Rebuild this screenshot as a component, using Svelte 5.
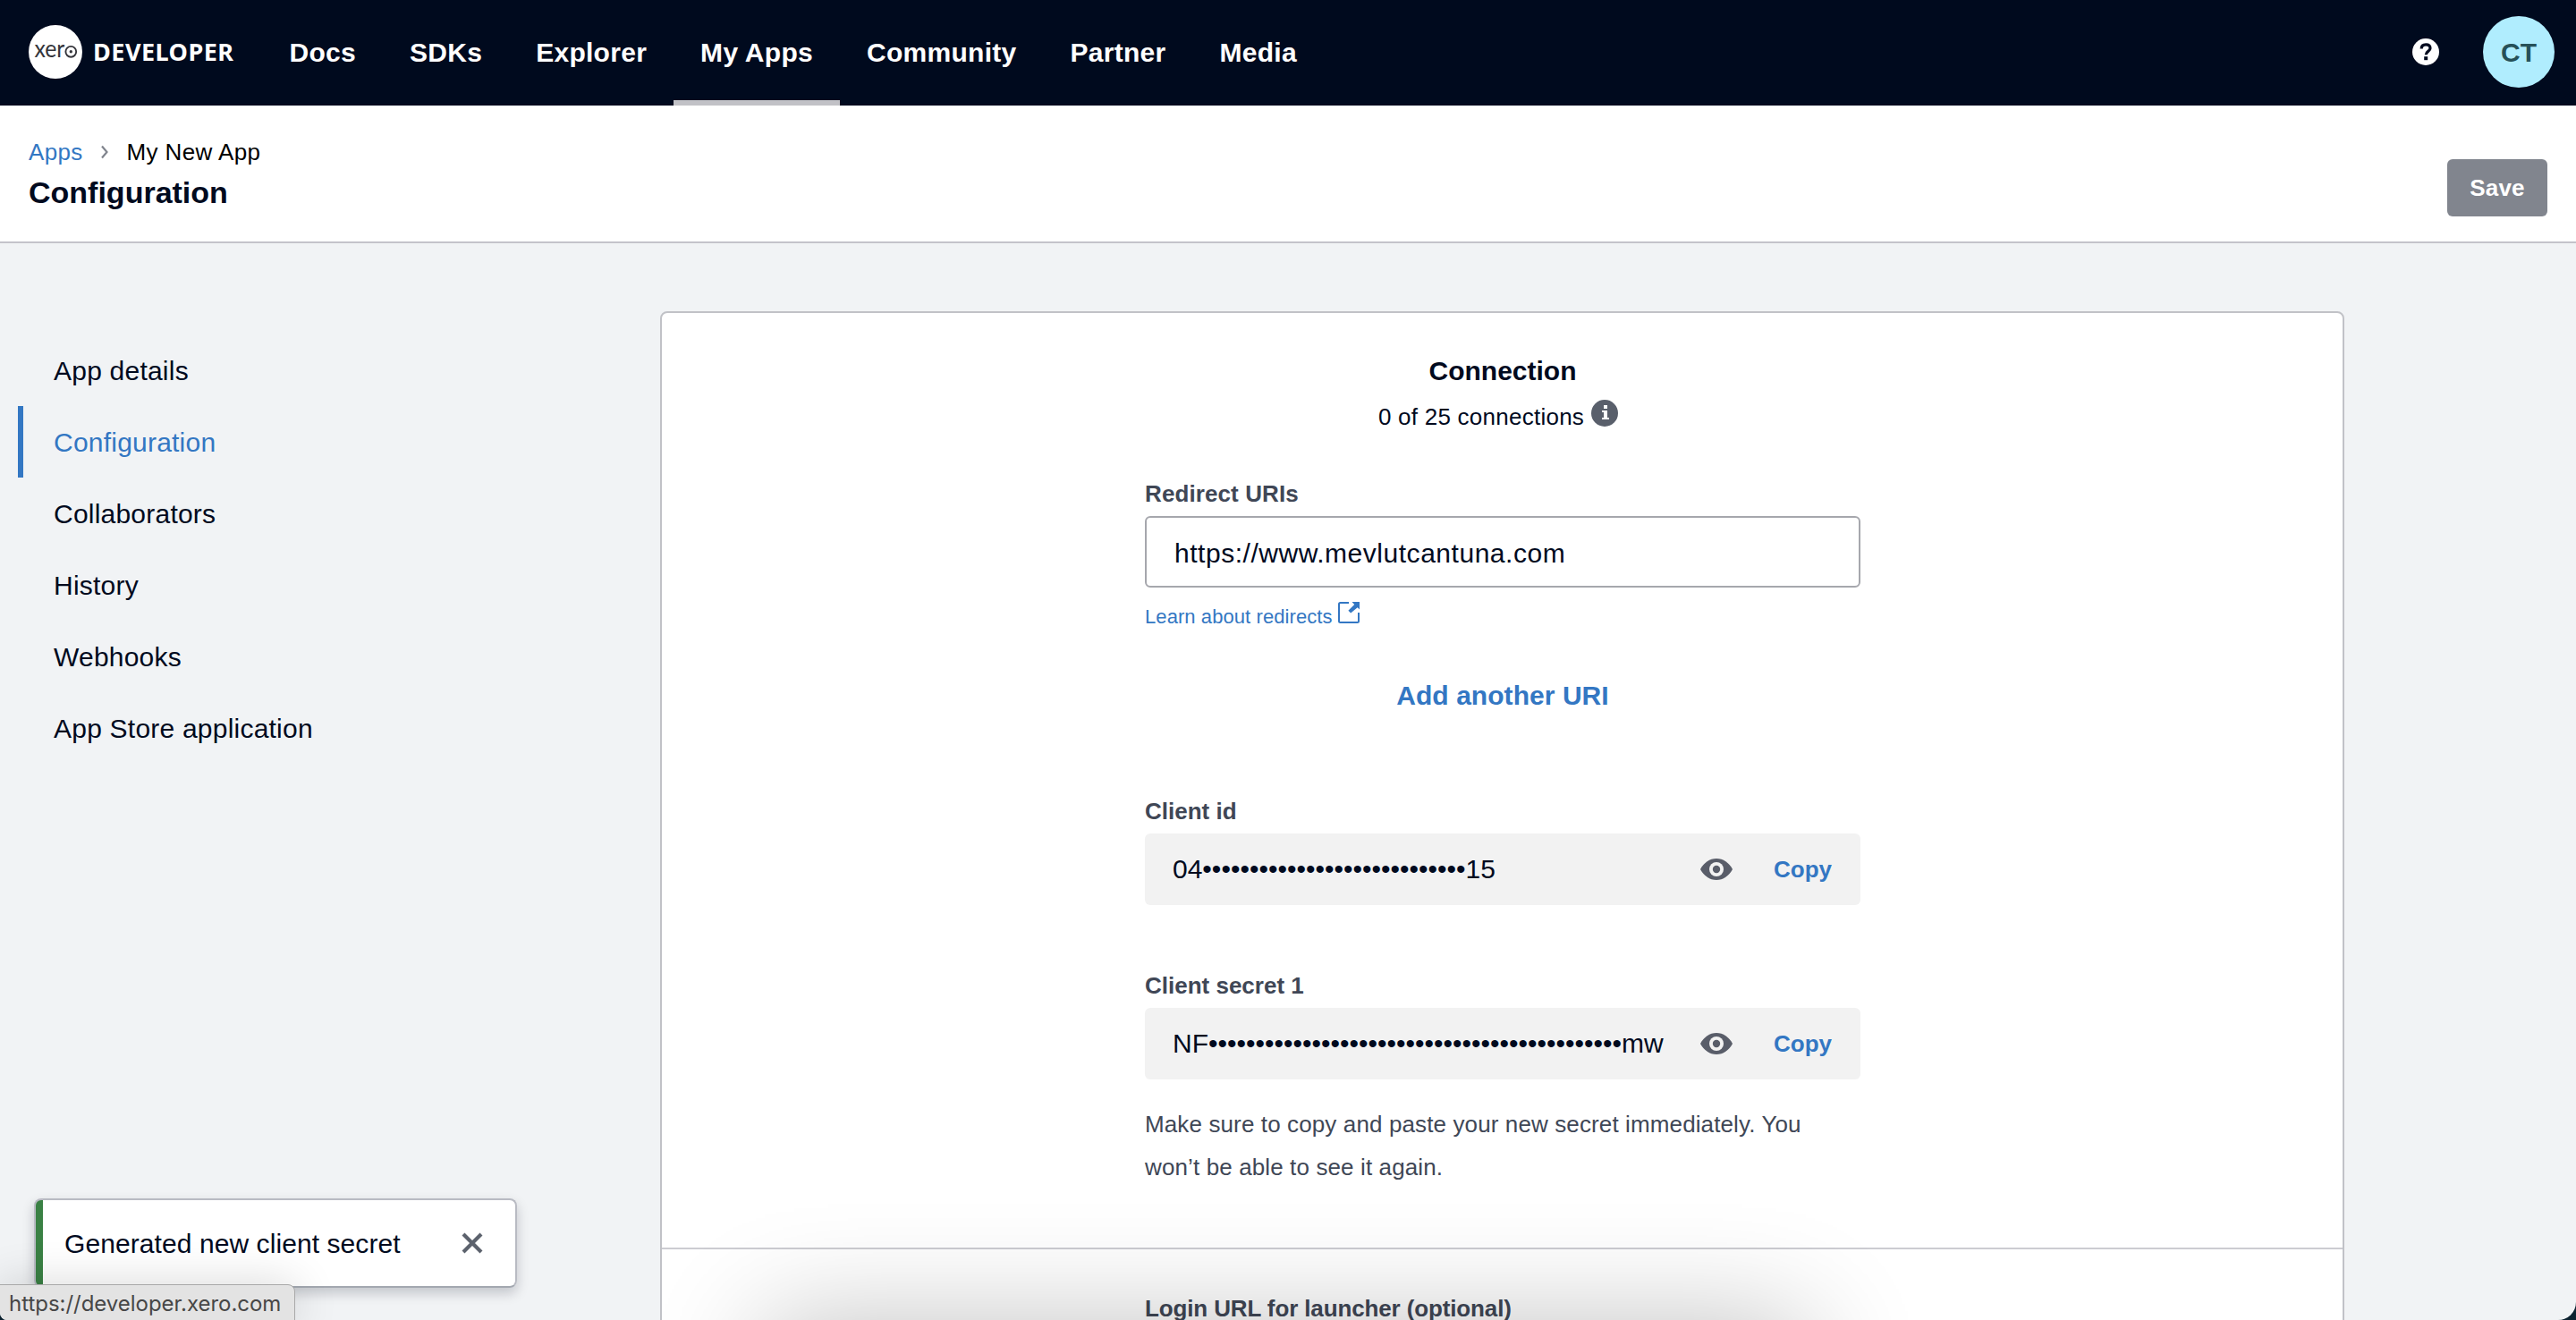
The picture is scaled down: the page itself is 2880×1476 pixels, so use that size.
<script>
  const navItems = ['Docs', 'SDKs', 'Explorer', 'My Apps', 'Community', 'Partner', 'Media'];
  const activeNav = 'My Apps';

  const sideItems = [
    'App details',
    'Configuration',
    'Collaborators',
    'History',
    'Webhooks',
    'App Store application'
  ];
  const activeSide = 'Configuration';

  const credentials = [
    { label: 'Client id', value: '04' + '•'.repeat(28) + '15' },
    { label: 'Client secret 1', value: 'NF' + '•'.repeat(44) + 'mw' }
  ];
</script>

<div class="window">
  <div class="page">
    <header class="topbar">
      <div class="brand">
        <svg class="logo" viewBox="0 0 60 60" width="60" height="60">
          <circle cx="30" cy="30" r="30" fill="#fff" />
          <text x="6.4" y="36.4" textLength="34" lengthAdjust="spacingAndGlyphs">xer</text>
          <circle cx="47.3" cy="29.8" r="5.900" fill="none" stroke="#35353b" stroke-width="1.900" />
          <circle cx="47.3" cy="29.8" r="1.7" fill="#35353b" />
        </svg>
        <span class="brand-name">DEVELOPER</span>
      </div>
      <nav class="nav">
        {#each navItems as item}
          <a class="nav-item" class:active={item === activeNav}>{item}</a>
        {/each}
      </nav>
      <div class="tools">
        <svg width="30" height="30" viewBox="0 0 30 30">
          <circle cx="15" cy="15" r="15" fill="#fff" />
          <path d="M10.2 11.6C10.2 8.6 12.2 6.9 15.2 6.9c2.9 0 4.8 1.6 4.8 4 0 3.6-4.7 3.4-4.7 7.3" fill="none" stroke="#000a1e" stroke-width="3.2" />
          <rect x="13.2" y="20.2" width="4" height="4" fill="#000a1e" />
        </svg>
        <div class="avatar">CT</div>
      </div>
    </header>

    <div class="titlebar">
      <div class="titles">
        <div class="crumbs">
          <a class="crumb-link">Apps</a>
          <svg width="10" height="16" viewBox="0 0 10 16">
            <path d="M2 1.5l5.5 6.5L2 14.5" fill="none" stroke="#81858e" stroke-width="2.2" />
          </svg>
          <span class="crumb-current">My New App</span>
        </div>
        <h1>Configuration</h1>
      </div>
      <button class="save">Save</button>
    </div>

    <div class="body">
      <aside class="side">
        {#each sideItems as item}
          <a class="side-item" class:active={item === activeSide}>{item}</a>
        {/each}
      </aside>

      <main class="card">
        <section class="column">
          <h2>Connection</h2>
          <div class="count">
            <span>0 of 25 connections</span>
            <svg width="30" height="30" viewBox="0 0 30 30">
              <circle cx="15" cy="15" r="15" fill="#595f6b" />
              <path d="M14 6h4v4h-4zM12 12h6v8h2v2h-8v-2h2v-6h-2z" fill="#fff" />
            </svg>
          </div>

          <div class="label redirect">Redirect URIs</div>
          <div class="input">https://www.mevlutcantuna.com</div>
          <a class="learn">
            <span>Learn about redirects</span>
            <svg width="24" height="24" viewBox="0 0 24 24">
              <path d="M12 1H2.500Q1 1 1 2.500V21.500Q1 23 2.500 23H21.500Q23 23 23 21.500V12" fill="none" stroke="#3377c3" stroke-width="2" />
              <path d="M15.500 0H24V8.500L21.700 6.300L14.200 12.600L11.400 9.800L18.200 3Z" fill="#3377c3" />
            </svg>
          </a>
          <button class="add">Add another URI</button>

          {#each credentials as cred}
            <div class="credential">
              <div class="label">{cred.label}</div>
              <div class="secret">
                <span class="value">{cred.value}</span>
                <svg width="36" height="24" viewBox="0 0 36 24">
                  <path d="M0 12C4 4.500 10.500 0 18 0s14 4.500 18 12c-4 7.500-10.500 12-18 12S4 19.500 0 12z" fill="#595d69" />
                  <circle cx="18" cy="12" r="8" fill="#f2f2f2" />
                  <circle cx="18" cy="12" r="4.200" fill="#595d69" />
                </svg>
                <button class="copy">Copy</button>
              </div>
            </div>
          {/each}
          <p class="hint">Make sure to copy and paste your new secret immediately. You won’t be able to see it again.</p>
        </section>
        <section class="launcher">
          <div class="column">
            <div class="label login">Login URL for launcher (optional)</div>
          </div>
        </section>
      </main>
    </div>

    <div class="sheet-shadow"></div>

    <div class="toast">
      <span class="toast-text">Generated new client secret</span>
      <svg width="24" height="24" viewBox="0 0 24 24">
        <path d="M2 2l20 20M22 2L2 22" stroke="#5c626d" stroke-width="4.200" />
      </svg>
    </div>

    <div class="status">https://developer.xero.com</div>
  </div>
</div>

<style>
  :global(body) {
    margin: 0;
    overflow: hidden;
  }
  .window {
    width: 2880px;
    height: 1476px;
    background: #0c2230;
    overflow: hidden;
  }
  .page {
    position: relative;
    display: flex;
    flex-direction: column;
    height: 1476px;
    box-sizing: border-box;
    overflow: hidden;
    border-radius: 0 0 20px 8px;
    background: #f1f3f5;
    color: #000a1e;
    font-family: 'Liberation Sans', Arial, sans-serif;
    font-size: 30px;
  }
  button {
    border: 0;
    padding: 0;
    background: none;
    font-family: inherit;
    font-weight: 700;
    color: #3377c3;
  }
  svg {
    display: block;
    flex: none;
  }

  .topbar {
    flex: none;
    display: flex;
    height: 118px;
    box-sizing: border-box;
    padding: 0 24px 0 32px;
    background: #000a1e;
    color: #fff;
    font-weight: 700;
  }
  .brand {
    display: flex;
    align-items: center;
    gap: 12px;
    width: 261.5px;
    height: 116px;
  }
  .logo text {
    font-family: Lato, sans-serif;
    font-weight: 400;
    font-size: 26px;
    fill: #35353b;
  }
  .brand-name {
    font-family: 'Noto Sans', sans-serif;
    font-weight: 700;
    font-size: 27px;
    line-height: 40px;
    letter-spacing: 0.5px;
  }
  .nav {
    display: flex;
  }
  .nav-item {
    height: 118px;
    box-sizing: border-box;
    padding: 0 30px;
    line-height: 117px;
    letter-spacing: 0.28px;
  }
  .nav-item.active {
    border-bottom: 6px solid #c1c1c6;
  }
  .tools {
    display: flex;
    align-items: center;
    gap: 49px;
    height: 116px;
    margin-left: auto;
  }
  .avatar {
    width: 80px;
    height: 80px;
    border-radius: 50%;
    background: #b0edfe;
    color: #265058;
    text-align: center;
    line-height: 81px;
  }

  .titlebar {
    flex: none;
    display: flex;
    justify-content: space-between;
    height: 154px;
    box-sizing: border-box;
    padding: 32px 32px 0;
    border-bottom: 2px solid #c4c3ca;
    background: #fff;
  }
  .crumbs {
    display: flex;
    align-items: center;
    height: 40px;
    font-size: 26px;
    line-height: 40px;
  }
  .crumbs svg {
    margin: 0 19px 0 20px;
  }
  .crumb-link {
    color: #3377c3;
    letter-spacing: 0.3px;
  }
  .crumb-current {
    color: #000;
    letter-spacing: 0.4px;
  }
  h1 {
    margin: 3px 0 0;
    font-size: 34px;
    line-height: 44px;
  }
  .save {
    width: 112px;
    height: 64px;
    margin-top: 28px;
    border-radius: 6px;
    background: #81858e;
    color: #fff;
    font-size: 26px;
    letter-spacing: 0.2px;
  }

  .body {
    flex: 1;
    display: flex;
    min-height: 0;
    padding-top: 76px;
  }
  .side {
    display: flex;
    flex-direction: column;
    width: 718px;
    padding: 26px 0 0 20px;
    box-sizing: border-box;
    margin-right: 20px;
  }
  .side-item {
    height: 80px;
    padding-left: 34px;
    border-left: 6px solid transparent;
    line-height: 82px;
    letter-spacing: 0.22px;
  }
  .side-item.active {
    border-left-color: #3377c3;
    color: #3377c3;
  }

  .card {
    width: 1883px;
    height: 1300px;
    box-sizing: border-box;
    border: 2px solid #c1c2c7;
    border-radius: 8px;
    background: #fff;
  }
  .column {
    display: flex;
    flex-direction: column;
    width: 800px;
    margin-left: 540px;
  }
  h2 {
    margin: 45px 0 0;
    font-size: 30px;
    line-height: 40px;
    text-align: center;
  }
  .count {
    display: flex;
    justify-content: center;
    gap: 8px;
    margin: 11px 10px 0 0;
    font-size: 26px;
    line-height: 40px;
    letter-spacing: 0.25px;
  }
  .count svg {
    margin-top: 1px;
  }
  .label {
    color: #404756;
    font-size: 26px;
    font-weight: 700;
    line-height: 40px;
  }
  .redirect {
    margin-top: 46px;
    letter-spacing: 0.1px;
  }
  .input {
    height: 80px;
    box-sizing: border-box;
    margin-top: 5px;
    padding-left: 31px;
    border: 2px solid #a6a7ad;
    border-radius: 6px;
    line-height: 79px;
    letter-spacing: 0.53px;
  }
  .learn {
    display: flex;
    gap: 6px;
    height: 33px;
    margin-top: 16px;
    color: #3377c3;
    font-size: 22px;
    line-height: 33px;
    letter-spacing: 0.08px;
  }
  .add {
    align-self: center;
    margin-top: 52px;
    font-size: 30px;
    line-height: 40px;
    letter-spacing: 0.05px;
  }
  .credential {
    margin-top: 70px;
  }
  .add + .credential {
    margin-top: 89px;
  }
  .secret {
    display: flex;
    align-items: center;
    height: 80px;
    box-sizing: border-box;
    margin-top: 5px;
    padding: 0 32px 0 31px;
    border-radius: 6px;
    background: #f2f2f2;
  }
  .value {
    flex: 1;
  }
  .copy {
    margin-left: 46px;
    font-size: 26px;
    line-height: 40px;
  }
  .hint {
    margin: 26px 0 66px;
    padding-right: 40px;
    color: #404756;
    font-size: 26px;
    line-height: 48px;
    letter-spacing: 0.12px;
  }
  .launcher {
    border-top: 2px solid #ccccd2;
  }
  .login {
    margin-top: 46px;
    letter-spacing: -0.13px;
  }

  /* Shadow cast upwards by a sheet that sits just below the viewport */
  .sheet-shadow {
    position: absolute;
    top: 1476px;
    left: 855px;
    width: 1164px;
    height: 400px;
    box-shadow: 0 0 120px rgba(0, 0, 0, 0.24);
  }

  .toast {
    position: absolute;
    left: 38px;
    top: 1340px;
    display: flex;
    align-items: center;
    justify-content: space-between;
    width: 540px;
    height: 100px;
    box-sizing: border-box;
    padding: 0 36px 0 24px;
    border: 2px solid #b9bbc3;
    border-bottom-color: #a3a8b0;
    border-radius: 8px;
    background: linear-gradient(to right, #3a8144 8px, #fff 8px);
    box-shadow: 0 6px 14px rgba(0, 10, 30, 0.2);
    letter-spacing: 0.08px;
  }
  .toast-text {
    padding: 1px 0 0 8px;
    line-height: 40px;
  }

  .status {
    position: absolute;
    left: -2px;
    top: 1436px;
    width: 332px;
    height: 44px;
    box-sizing: border-box;
    padding-left: 11px;
    border: 1px solid #a9a9a9;
    border-radius: 0 8px 0 0;
    background: #e3e3e3;
    box-shadow: 0 0 50px rgba(0, 0, 0, 0.16);
    color: #474747;
    font-family: Inter, sans-serif;
    font-size: 24px;
    line-height: 42px;
    letter-spacing: -0.03px;
  }
</style>
